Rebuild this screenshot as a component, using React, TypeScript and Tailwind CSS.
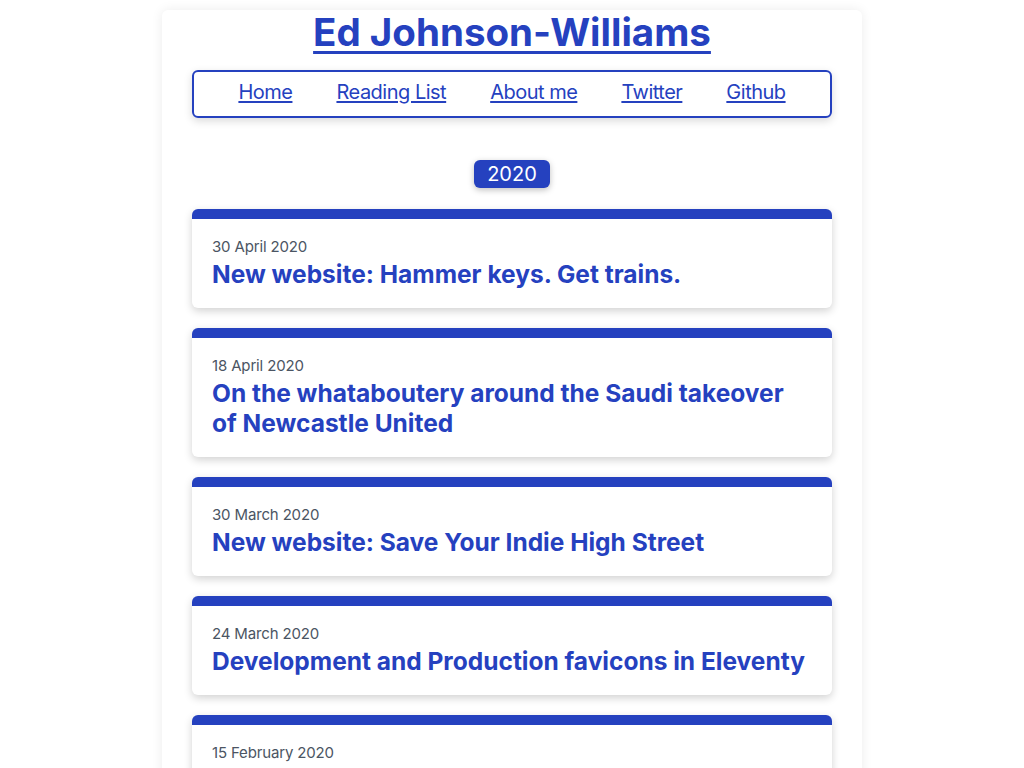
import React from "react";

const posts = [
  { date: "30 April 2020", title: "New website: Hammer keys. Get trains." },
  {
    date: "18 April 2020",
    title: "On the whataboutery around the Saudi takeover of Newcastle United",
  },
  { date: "30 March 2020", title: "New website: Save Your Indie High Street" },
  {
    date: "24 March 2020",
    title: "Development and Production favicons in Eleventy",
  },
  { date: "15 February 2020", title: "Weeknotes" },
];

const links = ["Home", "Reading List", "About me", "Twitter", "Github"];

export default function App() {
  return (
    <div className="min-h-screen bg-white font-['Inter',sans-serif] text-[#2541bf]">
      <div className="mx-auto mt-[10px] w-[700px] rounded-md bg-white pt-[2px] pb-10 shadow-[0_0_12px_rgba(0,0,0,0.08)]">
        {/* Header */}
        <h1 className="text-center text-[38.5px] leading-10 font-bold">
          <a href="#" className="underline decoration-[3px] underline-offset-[5px]">
            Ed Johnson-Williams
          </a>
        </h1>
        <nav className="mx-[30px] mt-[18px] flex justify-center gap-11 rounded-md border-2 border-[#2541bf] pt-1.5 pb-2.5 shadow-[0_3px_8px_rgba(0,0,0,0.15)]">
          {links.map((link) => (
            <a key={link} href="#" className="text-xl leading-7 tracking-tight underline underline-offset-2">
              {link}
            </a>
          ))}
        </nav>

        {/* Year */}
        <div className="mt-[42px] flex justify-center">
          <span className="rounded-md bg-[#2541bf] px-[13px] text-xl leading-7 text-white shadow-[0_2px_6px_rgba(0,0,0,0.25)]">
            2020
          </span>
        </div>

        {/* Posts */}
        <div className="mx-[30px] mt-[21px] flex flex-col gap-5">
          {posts.map((post) => (
            <div
              key={post.date}
              className="rounded-md border-t-[10px] border-[#2541bf] bg-white px-5 pt-4 pb-[19px] shadow-[0_3px_8px_rgba(0,0,0,0.18)]"
            >
              <p className="text-[15px] leading-6 tracking-[-0.01em] text-[#4b5563]">{post.date}</p>
              <h2 className="text-[24.5px] leading-[30px] font-bold">
                <a href="#">{post.title}</a>
              </h2>
            </div>
          ))}
        </div>
      </div>
    </div>
  );
}
